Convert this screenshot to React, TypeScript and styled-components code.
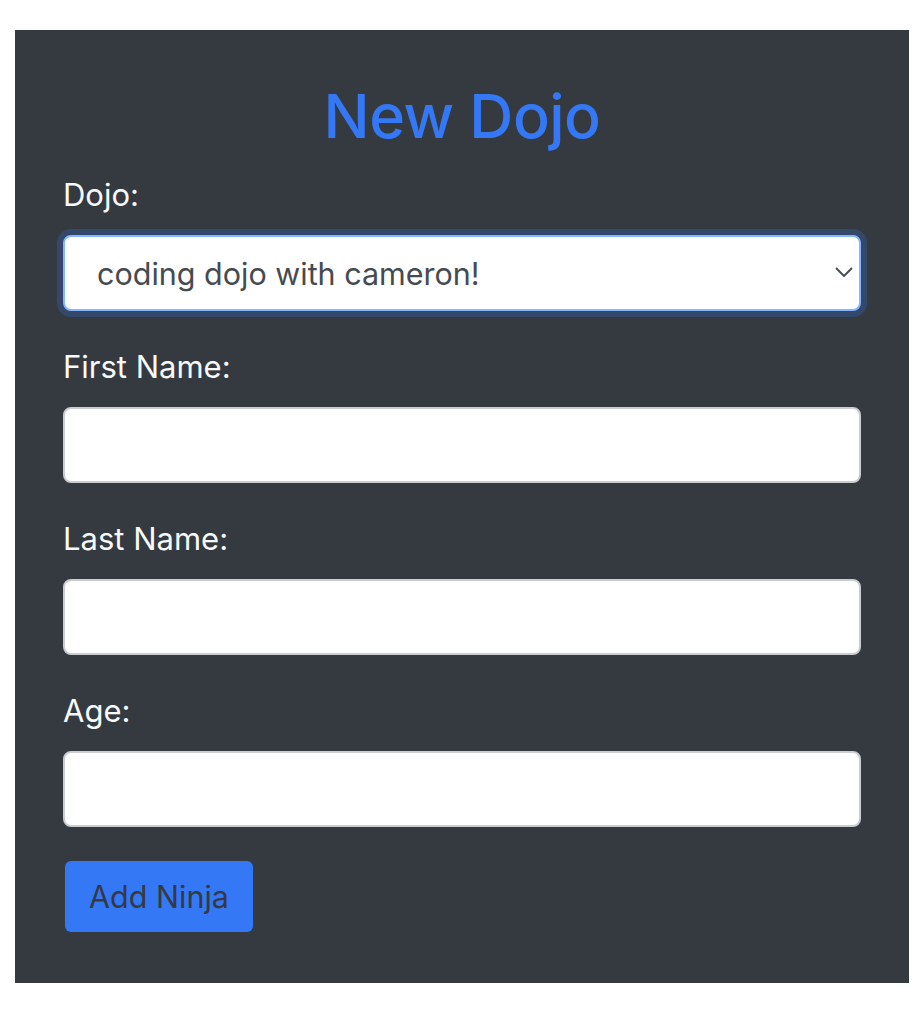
import React from "react";
import styled, { createGlobalStyle } from "styled-components";

const Global = createGlobalStyle`
  html, body { margin: 0; padding: 0; background: #ffffff; }
  body { font-family: Inter, "Noto Sans", "Liberation Sans", sans-serif; }
  * { box-sizing: border-box; }
`;

const Page = styled.div`
  padding: 30px 9px 33px 15px;
  background: #ffffff;
`;

const Panel = styled.form`
  background: #353a40;
  padding: 48px 48px 51px 48px;
  display: flex;
  flex-direction: column;
`;

const Title = styled.h2`
  margin: 0 0 16px 0;
  font-size: 61px;
  line-height: 77px;
  font-weight: 500;
  color: #3478f6;
  text-align: center;
  letter-spacing: -0.5px;
`;

const Group = styled.div<{ $last?: boolean }>`
  display: flex;
  flex-direction: column;
  margin-bottom: ${(p) => (p.$last ? "34px" : "32px")};
`;

const Label = styled.label`
  font-size: 31px;
  line-height: 48px;
  color: #f8f9fa;
  margin-bottom: 16px;
  padding-top: 1px;
  margin-top: -1px;
`;

const SelectWrap = styled.div`
  position: relative;
  height: 76px;
`;

const Select = styled.select`
  appearance: none;
  -webkit-appearance: none;
  width: 100%;
  height: 76px;
  border: 2px solid #86b7fe;
  border-radius: 8px;
  box-shadow: 0 0 0 6px #33486b;
  background: #ffffff;
  color: #464b51;
  font-family: Inter, "Noto Sans", "Liberation Sans", sans-serif;
  font-size: 30.5px;
  padding: 0 60px 0 32px;
  outline: none;
`;

const Chevron = styled.svg`
  position: absolute;
  right: 8px;
  top: 32px;
  width: 18px;
  height: 10px;
  pointer-events: none;
`;

const Input = styled.input`
  width: 100%;
  height: 76px;
  border: 2px solid #c9cdd2;
  border-radius: 8px;
  background: #ffffff;
  font-size: 31px;
  padding: 0 24px;
  outline: none;
`;

const Button = styled.button`
  align-self: flex-start;
  margin-left: 2px;
  width: 188px;
  height: 71px;
  border: none;
  border-radius: 6px;
  background: #3478f6;
  color: #343a40;
  font-family: Inter, "Noto Sans", "Liberation Sans", sans-serif;
  font-size: 30.5px;
  padding: 0;
  cursor: pointer;
`;

export default function App() {
  return (
    <>
      <Global />
      <Page>
        <Panel onSubmit={(e) => e.preventDefault()}>
          <Title>New Dojo</Title>
          <Group>
            <Label>Dojo:</Label>
            <SelectWrap>
              <Select defaultValue="cd">
                <option value="cd">coding dojo with cameron!</option>
              </Select>
              <Chevron viewBox="0 0 18 10">
                <path d="M1 1 L9 9 L17 1" fill="none" stroke="#4a4f55" strokeWidth="2" />
              </Chevron>
            </SelectWrap>
          </Group>
          <Group>
            <Label>First Name:</Label>
            <Input type="text" />
          </Group>
          <Group>
            <Label>Last Name:</Label>
            <Input type="text" />
          </Group>
          <Group $last>
            <Label>Age:</Label>
            <Input type="number" />
          </Group>
          <Button type="submit">Add Ninja</Button>
        </Panel>
      </Page>
    </>
  );
}
